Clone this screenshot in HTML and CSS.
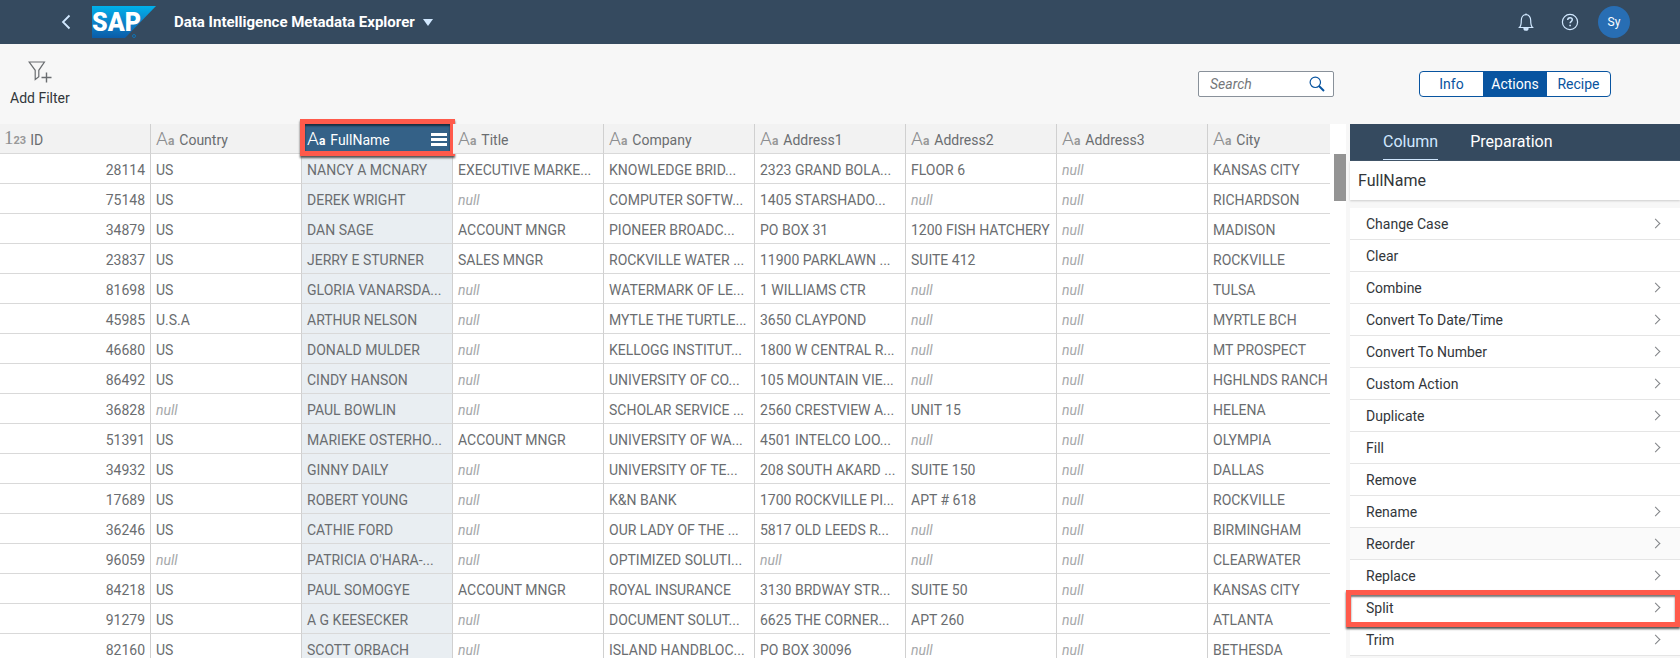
FILE: index.html
```html
<!DOCTYPE html>
<html lang="en">
<head>
<meta charset="utf-8">
<title>Data Intelligence Metadata Explorer</title>
<link rel="stylesheet" href="styles.css">
</head>
<body>
<div class="app">
  <header class="shell">
    <button class="shell-btn back" aria-label="Back"><svg width="10" height="16" viewBox="0 0 10 16"><path d="M8.500 1.500 2 8l6.500 6.500" fill="none" stroke="currentColor" stroke-width="1.800"/></svg></button>
    <a class="logo" href="#" aria-label="SAP home">
      <svg width="64" height="32" viewBox="0 0 64 32">
        <defs><linearGradient id="sky" x1="0" y1="0" x2="0" y2="1"><stop offset="0" stop-color="#00b1eb"/><stop offset=".5" stop-color="#0d83c9"/><stop offset="1" stop-color="#0a5ca8"/></linearGradient></defs>
        <path d="M0 0h64L33 32H0z" fill="url(#sky)"/>
        <text x="0" y="25" class="logo-text">SAP</text>
        <circle cx="42" cy="30" r="1.500" fill="none" stroke="#1173b5"/>
      </svg>
    </a>
    <button class="shell-title">Data Intelligence Metadata Explorer<span class="caret"></span></button>
    <div class="shell-actions">
      <button class="shell-btn" aria-label="Notifications"><svg width="16" height="18" viewBox="0 0 16 18" fill="none" stroke="currentColor" stroke-width="1.200"><path d="M1.500 14.500c1.600-1.600 1.800-3 1.800-7 0-3.500 1.700-5.800 4.700-5.800s4.700 2.300 4.700 5.800c0 4 .2 5.400 1.800 7z"/><path d="M6 15.200a2 2 0 0 0 4 0z" fill="currentColor"/><path d="M8 .5v1.500"/></svg></button>
      <button class="shell-btn" aria-label="Help"><svg width="18" height="18" viewBox="0 0 18 18" fill="none" stroke="currentColor"><circle cx="9" cy="9" r="7.600" stroke-width="1.200"/><path d="M6.700 7.100c0-1.500 1-2.300 2.300-2.300s2.300.9 2.300 2c0 1.800-2.200 1.800-2.200 3.500" stroke-width="1.400"/><path d="M9.100 11.700v1.500" stroke-width="1.600"/></svg></button>
      <button class="shell-btn" aria-label="User profile"><span class="avatar">Sy</span></button>
    </div>
  </header>

  <div class="toolbar">
    <button class="add-filter">
      <svg width="24" height="22" viewBox="0 0 24 22" fill="none" stroke="currentColor" stroke-width="1.200"><path d="M1.200 1h15.200l-5.600 8.300v6.400L7.200 18.500V9.300z"/><path d="M18.500 11.500v10M13.500 16.500h10" stroke-width="1.400"/></svg>
      Add Filter
    </button>
    <label class="search">
      <input type="text" placeholder="Search" aria-label="Search">
      <svg width="16" height="16" viewBox="0 0 16 16" fill="none" stroke="currentColor"><circle cx="6.300" cy="6.300" r="5.200" stroke-width="1.200"/><path d="m10 10 5 5" stroke-width="2"/></svg>
    </label>
    <div class="segments">
      <button>Info</button><button class="on">Actions</button><button>Recipe</button>
    </div>
  </div>

  <main class="main">
    <section class="grid">
      <table>
        <colgroup><col class="c"><col class="c"><col class="c"><col class="c"><col class="c"><col class="c"><col class="c"><col class="c"><col></colgroup>
        <thead>
          <tr>
            <th><div class="head"><span class="type num" aria-hidden="true">1<b>23</b></span>ID</div></th>
            <th><div class="head"><span class="type" aria-hidden="true">A<b>a</b></span>Country</div></th>
            <th class="sel"><div class="head"><span class="type" aria-hidden="true">A<b>a</b></span>FullName<button class="menu" aria-label="Column menu"><i></i><i></i><i></i></button></div><span class="mark"></span></th>
            <th><div class="head"><span class="type" aria-hidden="true">A<b>a</b></span>Title</div></th>
            <th><div class="head"><span class="type" aria-hidden="true">A<b>a</b></span>Company</div></th>
            <th><div class="head"><span class="type" aria-hidden="true">A<b>a</b></span>Address1</div></th>
            <th><div class="head"><span class="type" aria-hidden="true">A<b>a</b></span>Address2</div></th>
            <th><div class="head"><span class="type" aria-hidden="true">A<b>a</b></span>Address3</div></th>
            <th><div class="head"><span class="type" aria-hidden="true">A<b>a</b></span>City</div></th>
          </tr>
        </thead>
        <tbody>
          <tr><td>28114</td><td>US</td><td>NANCY A MCNARY</td><td>EXECUTIVE MARKE...</td><td>KNOWLEDGE BRID...</td><td>2323 GRAND BOLA...</td><td>FLOOR 6</td><td><em>null</em></td><td>KANSAS CITY</td></tr>
          <tr><td>75148</td><td>US</td><td>DEREK WRIGHT</td><td><em>null</em></td><td>COMPUTER SOFTW...</td><td>1405 STARSHADO...</td><td><em>null</em></td><td><em>null</em></td><td>RICHARDSON</td></tr>
          <tr><td>34879</td><td>US</td><td>DAN SAGE</td><td>ACCOUNT MNGR</td><td>PIONEER BROADC...</td><td>PO BOX 31</td><td>1200 FISH HATCHERY</td><td><em>null</em></td><td>MADISON</td></tr>
          <tr><td>23837</td><td>US</td><td>JERRY E STURNER</td><td>SALES MNGR</td><td>ROCKVILLE WATER ...</td><td>11900 PARKLAWN ...</td><td>SUITE 412</td><td><em>null</em></td><td>ROCKVILLE</td></tr>
          <tr><td>81698</td><td>US</td><td>GLORIA VANARSDA...</td><td><em>null</em></td><td>WATERMARK OF LE...</td><td>1 WILLIAMS CTR</td><td><em>null</em></td><td><em>null</em></td><td>TULSA</td></tr>
          <tr><td>45985</td><td>U.S.A</td><td>ARTHUR NELSON</td><td><em>null</em></td><td>MYTLE THE TURTLE...</td><td>3650 CLAYPOND</td><td><em>null</em></td><td><em>null</em></td><td>MYRTLE BCH</td></tr>
          <tr><td>46680</td><td>US</td><td>DONALD MULDER</td><td><em>null</em></td><td>KELLOGG INSTITUT...</td><td>1800 W CENTRAL R...</td><td><em>null</em></td><td><em>null</em></td><td>MT PROSPECT</td></tr>
          <tr><td>86492</td><td>US</td><td>CINDY HANSON</td><td><em>null</em></td><td>UNIVERSITY OF CO...</td><td>105 MOUNTAIN VIE...</td><td><em>null</em></td><td><em>null</em></td><td>HGHLNDS RANCH</td></tr>
          <tr><td>36828</td><td><em>null</em></td><td>PAUL BOWLIN</td><td><em>null</em></td><td>SCHOLAR SERVICE ...</td><td>2560 CRESTVIEW A...</td><td>UNIT 15</td><td><em>null</em></td><td>HELENA</td></tr>
          <tr><td>51391</td><td>US</td><td>MARIEKE OSTERHO...</td><td>ACCOUNT MNGR</td><td>UNIVERSITY OF WA...</td><td>4501 INTELCO LOO...</td><td><em>null</em></td><td><em>null</em></td><td>OLYMPIA</td></tr>
          <tr><td>34932</td><td>US</td><td>GINNY DAILY</td><td><em>null</em></td><td>UNIVERSITY OF TE...</td><td>208 SOUTH AKARD ...</td><td>SUITE 150</td><td><em>null</em></td><td>DALLAS</td></tr>
          <tr><td>17689</td><td>US</td><td>ROBERT YOUNG</td><td><em>null</em></td><td>K&amp;N BANK</td><td>1700 ROCKVILLE PI...</td><td>APT # 618</td><td><em>null</em></td><td>ROCKVILLE</td></tr>
          <tr><td>36246</td><td>US</td><td>CATHIE FORD</td><td><em>null</em></td><td>OUR LADY OF THE ...</td><td>5817 OLD LEEDS R...</td><td><em>null</em></td><td><em>null</em></td><td>BIRMINGHAM</td></tr>
          <tr><td>96059</td><td><em>null</em></td><td>PATRICIA O'HARA-...</td><td><em>null</em></td><td>OPTIMIZED SOLUTI...</td><td><em>null</em></td><td><em>null</em></td><td><em>null</em></td><td>CLEARWATER</td></tr>
          <tr><td>84218</td><td>US</td><td>PAUL SOMOGYE</td><td>ACCOUNT MNGR</td><td>ROYAL INSURANCE</td><td>3130 BRDWAY STR...</td><td>SUITE 50</td><td><em>null</em></td><td>KANSAS CITY</td></tr>
          <tr><td>91279</td><td>US</td><td>A G KEESECKER</td><td><em>null</em></td><td>DOCUMENT SOLUT...</td><td>6625 THE CORNER...</td><td>APT 260</td><td><em>null</em></td><td>ATLANTA</td></tr>
          <tr><td>82160</td><td>US</td><td>SCOTT ORBACH</td><td><em>null</em></td><td>ISLAND HANDBLOC...</td><td>PO BOX 30096</td><td><em>null</em></td><td><em>null</em></td><td>BETHESDA</td></tr>
        </tbody>
      </table>
      <div class="track"><div class="thumb"></div></div>
    </section>

    <aside class="panel">
      <nav class="tabs"><button class="on">Column</button><button>Preparation</button></nav>
      <h2>FullName</h2>
      <ul class="actions">
        <li><button class="more">Change Case</button></li>
        <li><button>Clear</button></li>
        <li><button class="more">Combine</button></li>
        <li><button class="more">Convert To Date/Time</button></li>
        <li><button class="more">Convert To Number</button></li>
        <li><button class="more">Custom Action</button></li>
        <li><button class="more">Duplicate</button></li>
        <li><button class="more">Fill</button></li>
        <li><button>Remove</button></li>
        <li><button class="more">Rename</button></li>
        <li class="hover"><button class="more">Reorder</button></li>
        <li><button class="more">Replace</button></li>
        <li class="focus"><button class="more">Split</button><span class="mark"></span></li>
        <li><button class="more">Trim</button></li>
      </ul>
    </aside>
  </main>
</div>
</body>
</html>
```
FILE: styles.css
```css
* { box-sizing: border-box; }
body {
  margin: 0;
  font: 14px/20px Roboto, "Liberation Sans", sans-serif;
  color: #32363a;
  background: #f7f7f7;
}
button {
  font: inherit;
  color: inherit;
  background: none;
  border: 0;
  padding: 0;
}
svg { display: block; }

.app { display: flex; flex-direction: column; height: 100vh; overflow: hidden; }

/* Shell bar */
.shell {
  display: flex;
  align-items: center;
  flex: none;
  height: 44px;
  padding: 0 44px;
  background: #354a5f;
  color: #d1e8ff;
}
.shell-btn { display: flex; align-items: center; justify-content: center; width: 44px; height: 44px; }
.logo { margin: 0 18px 0 4px; }
.logo-text { font: 900 25px Roboto, sans-serif; fill: #fff; }
.shell-title { display: flex; align-items: center; gap: 8px; font-size: 15px; font-weight: 700; color: #fff; }
.caret { border: 5px solid transparent; border-top: 7px solid #d1e8ff; border-bottom: 0; }
.shell-actions { display: flex; margin-left: auto; }
.avatar { width: 32px; height: 32px; border-radius: 50%; background: #286eb4; color: #fff; font-size: 12px; line-height: 32px; text-align: center; }

/* Toolbar */
.toolbar { display: flex; align-items: flex-start; flex: none; height: 80px; padding: 0 69px 0 10px; }
.add-filter { display: flex; flex-direction: column; align-items: center; gap: 5px; padding-top: 17px; }
.add-filter svg { color: #6a6d70; }
.search {
  display: flex;
  align-items: center;
  width: 136px;
  height: 26px;
  margin: 27px 85px 0 auto;
  padding: 0 8px 0 11px;
  background: #fff;
  border: 1px solid #89919a;
  border-radius: 2px;
  color: #0854a0;
}
.search input { flex: 1; min-width: 0; padding: 0; border: 0; outline: 0; background: none; font: inherit; }
.search input::placeholder { color: #74777a; font-style: italic; opacity: 1; }
.segments { display: flex; height: 26px; margin-top: 27px; background: #fff; border: 1px solid #0854a0; border-radius: 4px; overflow: hidden; color: #0854a0; }
.segments button { width: 63px; }
.segments .on { width: 64px; background: #0854a0; color: #fff; }

.main { display: flex; flex: 1; gap: 4px; min-height: 0; }

/* Data grid */
.grid { display: flex; flex: 1; min-width: 0; background: #fff; }
table { flex: 1; min-width: 0; width: 100%; align-self: flex-start; table-layout: fixed; border-collapse: separate; border-spacing: 0; color: #6a6d70; }
.c { width: 151px; }
th, td { height: 30px; padding: 2px 5px 0; border-bottom: 1px solid #d9d9d9; border-right: 1px solid #d0d0d0; text-align: left; font-weight: 400; white-space: nowrap; }
td { overflow: hidden; }
th:last-child, td:last-child { border-right: 0; padding-right: 0; }
td:first-child { text-align: right; padding-left: 0; }
th { position: relative; background: #f2f2f2; }
th:first-child { padding-left: 4px; }
td:nth-child(3) { background: #e9eef2; }
td em { color: #a6a8aa; }
.head { display: flex; align-items: center; }
.type { margin-right: 5px; font: 300 19px/22px Roboto, sans-serif; color: #8c8e90; }
.type b { font-size: 12px; font-weight: 700; color: #999; }
.num { margin-right: 4px; font-family: "Liberation Serif", serif; font-weight: 400; }
.num b { font-family: Roboto, sans-serif; font-size: 11px; }
.sel { background: #346187; color: #fff; }
.sel .type, .sel .type b { color: #fff; }
.menu { display: flex; flex-direction: column; gap: 2px; width: 16px; margin-left: auto; }
.menu i { height: 3px; background: #fff; }

.track { flex: none; width: 16px; padding: 30px 0 0 4px; }
.thumb { height: 47px; background: #949494; }

/* Callout frames */
.mark {
  position: absolute;
  inset: -5px -3px -3px -2px;
  border: 5px solid #ff5a4b;
  box-shadow: 0 2px 2px #555, inset 0 2px 2px #0008;
  pointer-events: none;
}

/* Side panel */
.panel { flex: none; width: 330px; }
.tabs { display: flex; gap: 32px; height: 37px; padding: 0 33px; background: #354a5f; color: #fff; font-size: 16px; }
.tabs button { border-bottom: 1px solid transparent; height: 36px; }
.tabs .on { color: #d1e8ff; border-color: #d1e8ff; }
h2 { margin: 0 0 8px; padding: 10px 8px 9px; background: #fff; box-shadow: 0 1px 2px #ccc; font-size: 16px; font-weight: 400; }
.actions { margin: 0; padding: 0; list-style: none; background: #fff; }
.actions li { position: relative; border-bottom: 1px solid #e5e5e5; }
.actions button { display: flex; align-items: center; justify-content: space-between; width: 100%; height: 31px; padding: 0 21px 0 16px; text-align: left; }
.more::after { content: ""; width: 6px; height: 6px; border: solid #808386; border-width: 1px 1px 0 0; transform: rotate(45deg); }
.actions .hover { background: #fafafa; }
.focus button { outline: 1px dotted #32363a; outline-offset: -1px; }
.focus .mark { inset: -2px 0 -4px -4px; }
```
